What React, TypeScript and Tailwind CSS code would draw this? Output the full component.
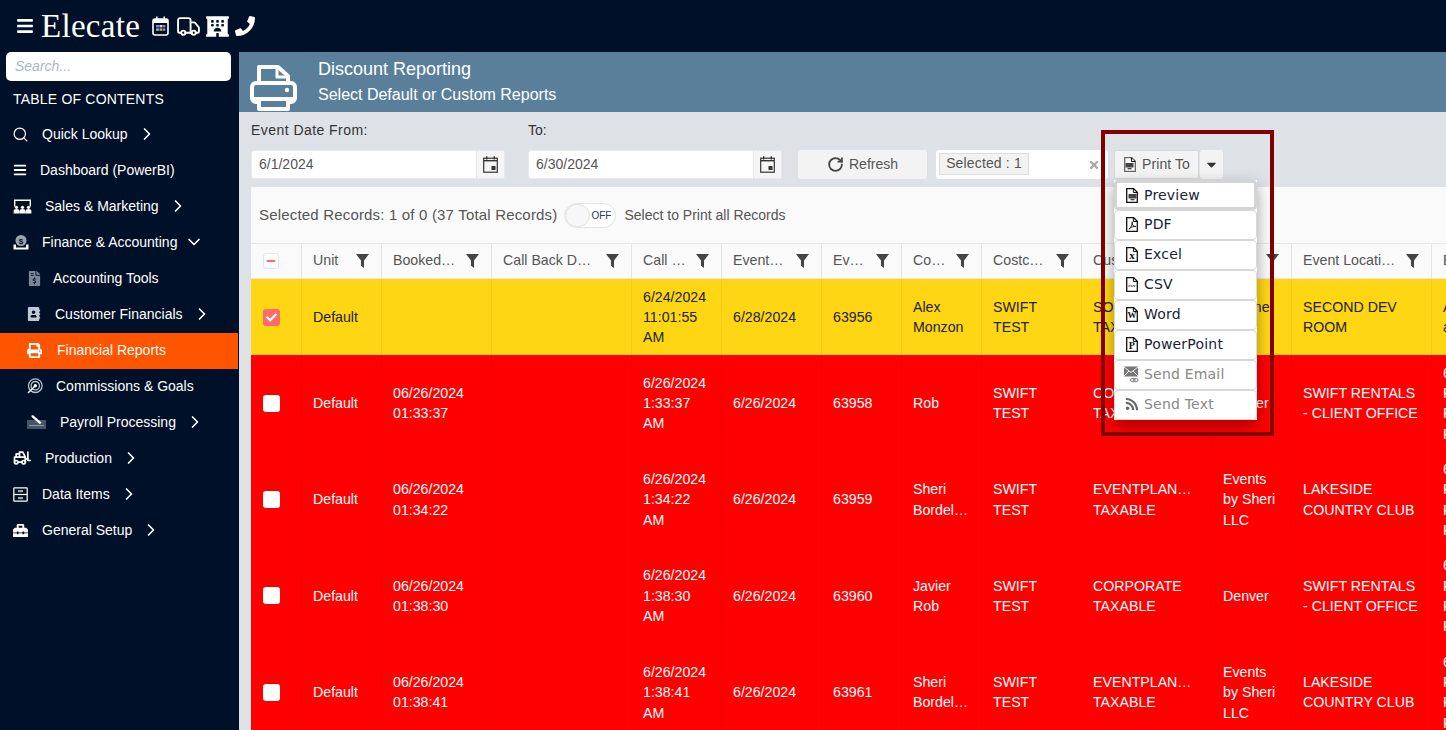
import React from "react";
import { Search, ChevronRight, ChevronDown, Truck, RotateCw } from "lucide-react";
import { FaBars, FaHotel, FaPhone, FaFileInvoiceDollar, FaAddressBook, FaPrint, FaToolbox, FaRss, FaCaretDown, FaTimes, FaCheck, FaMinus } from "react-icons/fa";
import { TbForklift } from "react-icons/tb";

const cols = "grid grid-cols-[51px_80px_110px_140px_90px_100px_80px_80px_100px_130px_80px_140px_100px]";

function CalendarTop() {
  return (
    <svg width="17" height="20" viewBox="0 0 17 20" fill="none">
      <rect x="1" y="3" width="15" height="16" rx="2" stroke="white" strokeWidth="1.6" />
      <rect x="1" y="3" width="15" height="4" fill="white" />
      <rect x="4" y="0.5" width="1.6" height="4" fill="white" />
      <rect x="11.4" y="0.5" width="1.6" height="4" fill="white" />
      <rect x="4" y="9" width="3" height="2.4" fill="#7a8cc0" />
      <rect x="7.5" y="9" width="3" height="2.4" fill="#d0d8e8" />
      <rect x="11" y="9" width="2.4" height="2.4" fill="#c06a80" />
      <rect x="4" y="12.4" width="3" height="2.4" fill="#6fb0d0" />
      <rect x="7.5" y="12.4" width="3" height="2.4" fill="#d0a060" />
      <rect x="11" y="12.4" width="2.4" height="2.4" fill="#7a8cc0" />
    </svg>
  );
}

function BigPrinter() {
  return (
    <svg width="47" height="47" viewBox="0 0 47 47" fill="none" stroke="white" strokeWidth="4" strokeLinejoin="round">
      <path d="M9 20V3h19l10 9v8" />
      <path d="M27 3v10h11" strokeWidth="3" />
      <path d="M9 38H6a4 4 0 0 1-4-4V23a4 4 0 0 1 4-4h35a4 4 0 0 1 4 4v11a4 4 0 0 1-4 4h-3" />
      <path d="M3 35h41" strokeWidth="4" />
      <path d="M9 35v10h29V35" />
      <circle cx="37" cy="26" r="2.2" fill="white" stroke="none" />
    </svg>
  );
}

function CalIcon() {
  return (
    <svg width="15" height="17" viewBox="0 0 15 17" fill="none">
      <rect x="0.7" y="2.2" width="13.6" height="14" stroke="#333" strokeWidth="1.2" />
      <rect x="0.7" y="4" width="13.6" height="1.4" fill="#333" />
      <rect x="3" y="0.3" width="1.4" height="3.2" fill="#333" />
      <rect x="10.6" y="0.3" width="1.4" height="3.2" fill="#333" />
      <rect x="8.5" y="10" width="4" height="4" fill="#333" />
    </svg>
  );
}

function SalesIcon() {
  return (
    <svg width="19" height="15" viewBox="0 0 19 15" fill="white">
      <path d="M1 0.5h17v7h-1.4V2H2.4v5.5H1z" />
      <circle cx="3.5" cy="8.3" r="1.6" />
      <circle cx="9.5" cy="8.3" r="1.6" />
      <circle cx="15.5" cy="8.3" r="1.6" />
      <path d="M0.6 14.5v-2a2.9 2.4 0 0 1 5.8 0v2zM6.6 14.5v-2a2.9 2.4 0 0 1 5.8 0v2zM12.6 14.5v-2a2.9 2.4 0 0 1 5.8 0v2z" />
    </svg>
  );
}

function FinanceIcon() {
  return (
    <svg width="16" height="15" viewBox="0 0 16 15">
      <circle cx="8" cy="5.5" r="5.5" fill="#9aa3b2" />
      <text x="8" y="8.5" fontSize="8" fontWeight="700" textAnchor="middle" fill="#001029" fontFamily="Liberation Sans">$</text>
      <path d="M0.5 9.5h2.5v3h10v-3h2.5v5h-15z" fill="white" />
    </svg>
  );
}

function TargetIcon() {
  return (
    <svg width="16" height="16" viewBox="0 0 16 16" fill="none" stroke="#b9c2cf" strokeWidth="1.3">
      <circle cx="8.3" cy="7.7" r="6.8" />
      <circle cx="8.3" cy="7.7" r="4.2" />
      <circle cx="8.3" cy="7.7" r="1.7" fill="white" stroke="none" />
      <path d="M1 15l6.5-6.5" stroke="white" strokeWidth="1.5" />
    </svg>
  );
}

function PayrollIcon() {
  return (
    <svg width="19" height="14" viewBox="0 0 19 14">
      <rect x="0" y="5" width="19" height="9" fill="#465468" />
      <rect x="2" y="10" width="15" height="1" fill="#8a95a6" />
      <path d="M4.5 0.5l1.7-0.3 8.3 7.4-1.5 1.6L4.6 2z" fill="white" />
    </svg>
  );
}

function DrawerIcon() {
  return (
    <svg width="15" height="15" viewBox="0 0 15 15" fill="none" stroke="white" strokeWidth="1.2">
      <rect x="0.8" y="0.8" width="13.4" height="13.4" rx="0.8" />
      <path d="M0.8 7.5h13.4" />
      <rect x="5" y="3" width="5" height="2.2" fill="#9aa3b2" stroke="none" />
      <rect x="5" y="10" width="5" height="2.2" fill="#9aa3b2" stroke="none" />
    </svg>
  );
}

function Funnel() {
  return (
    <svg width="13" height="14" viewBox="0 0 13 14" className="shrink-0">
      <path d="M0 0h13L8 6.5V14L5 11.8V6.5z" fill="#444" />
    </svg>
  );
}

function Doc({ children, muted }: { children?: React.ReactNode; muted?: boolean }) {
  return (
    <span className="relative flex h-[15px] w-[12px] shrink-0 items-center justify-center">
      <svg width="12" height="15" viewBox="0 0 12 15" fill="none" className="absolute inset-0">
        <path d="M0.7 0.7h7l3.6 3.6v10H0.7z" fill="white" stroke={muted ? "#666" : "#111"} strokeWidth="1.3" />
        <path d="M7.4 0.7v3.8h3.9" stroke="#111" strokeWidth="1" />
      </svg>
      {children}
    </span>
  );
}

function MonitorGlyph() {
  return (
    <svg width="9" height="8" viewBox="0 0 9 8" className="relative mt-[3px]">
      <rect x="0.5" y="1" width="8" height="4.5" fill="#444" />
      <rect x="2.5" y="6" width="4" height="1.3" fill="#444" />
    </svg>
  );
}

const letter = "relative mt-[3px] font-bold leading-none text-[#111] [font-family:'Liberation_Serif',serif]";

const menu = [
  { label: "Preview", icon: <Doc><MonitorGlyph /></Doc>, focus: true },
  {
    label: "PDF",
    icon: (
      <Doc>
        <svg width="9" height="9" viewBox="0 0 9 9" fill="none" className="relative mt-[3px]">
          <path d="M1 8.2C3 6.5 4.6 3 4.2.8c-.6 3 1.4 5 3.8 4.8C5.6 5 3 6 1 8.2z" stroke="#111" strokeWidth="0.9" />
        </svg>
      </Doc>
    ),
  },
  { label: "Excel", icon: <Doc><span className={`${letter} text-[11px]`}>x</span></Doc> },
  { label: "CSV", icon: <Doc><span className={`${letter} text-[5px]`}>csv</span></Doc> },
  { label: "Word", icon: <Doc><span className={`${letter} text-[9px]`}>W</span></Doc> },
  { label: "PowerPoint", icon: <Doc><span className={`${letter} text-[10px]`}>P</span></Doc> },
  {
    label: "Send Email",
    muted: true,
    icon: (
      <svg width="15" height="17" viewBox="0 0 15 17" fill="none" className="-ml-[2px] mr-[-1px] shrink-0">
        <rect x="0" y="0.5" width="14" height="10" fill="#777" />
        <path d="M0 1l7 5.5L14 1M0 10l5-5M14 10L9 5" stroke="white" strokeWidth="0.9" />
        <rect x="6.5" y="12.5" width="4.5" height="3.2" rx="1.6" stroke="#777" />
        <rect x="9.5" y="12.5" width="4.5" height="3.2" rx="1.6" stroke="#777" />
      </svg>
    ),
  },
  { label: "Send Text", muted: true, icon: <FaRss className="-ml-[1px] mr-[-1px] shrink-0 text-[#666]" size={14} /> },
];

const sideItems = [
  { label: "Quick Lookup", row: "pl-[13px]", box: "w-[29px]", gap: "ml-[9px]", chevron: "r", icon: <Search size={17} strokeWidth={1.7} color="white" className="-ml-[1px]" /> },
  { label: "Dashboard (PowerBI)", row: "pl-[13px]", box: "w-[27px]", gap: "", chevron: "", icon: <FaBars size={14} color="white" /> },
  { label: "Sales & Marketing", row: "pl-[13px]", box: "w-[32px]", gap: "ml-[9px]", chevron: "r", icon: <SalesIcon /> },
  { label: "Finance & Accounting", row: "pl-[13px]", box: "w-[29px]", gap: "ml-[7px]", chevron: "d", icon: <FinanceIcon /> },
  { label: "Accounting Tools", row: "pl-[27px]", box: "w-[26px]", gap: "", chevron: "", icon: <FaFileInvoiceDollar size={15} color="#7a8698" /> },
  { label: "Customer Financials", row: "pl-[27px]", box: "w-[28px]", gap: "ml-[9px]", chevron: "r", icon: <FaAddressBook size={14} color="#c3c9d3" /> },
  { label: "Financial Reports", row: "pl-[27px]", box: "w-[30px]", gap: "", chevron: "", active: true, icon: <FaPrint size={15} color="white" /> },
  { label: "Commissions & Goals", row: "pl-[27px]", box: "w-[29px]", gap: "", chevron: "", icon: <TargetIcon /> },
  { label: "Payroll Processing", row: "pl-[27px]", box: "w-[33px]", gap: "ml-[9px]", chevron: "r", icon: <PayrollIcon /> },
  { label: "Production", row: "pl-[12px]", box: "w-[33px]", gap: "ml-[9px]", chevron: "r", icon: <TbForklift size={20} color="white" /> },
  { label: "Data Items", row: "pl-[13px]", box: "w-[29px]", gap: "ml-[9px]", chevron: "r", icon: <DrawerIcon /> },
  { label: "General Setup", row: "pl-[13px]", box: "w-[29px]", gap: "ml-[9px]", chevron: "r", icon: <FaToolbox size={15} color="white" /> },
];

const heads = ["Unit", "Booked…", "Call Back D…", "Call …", "Event…", "Ev…", "Co…", "Costc…", "Cust…", "", "Event Locati…", "E"];

type Row = { selected?: boolean; cells: string[][] };
const rows: Row[] = [
  {
    selected: true,
    cells: [["Default"], [], [], ["6/24/2024", "11:01:55", "AM"], ["6/28/2024"], ["63956"], ["Alex", "Monzon"], ["SWIFT", "TEST"], ["SOUTHWEST", "TAXABLE"], ["Income-", "Tax"], ["SECOND DEV", "ROOM"], ["Alex", "alex"]],
  },
  {
    cells: [["Default"], ["06/26/2024", "01:33:37"], [], ["6/26/2024", "1:33:37", "AM"], ["6/26/2024"], ["63958"], ["Rob"], ["SWIFT", "TEST"], ["CORPORATE", "TAXABLE"], ["Denver"], ["SWIFT RENTALS", "- CLIENT OFFICE"], ["6/26/2024", "Rob", "Rob", "Rob"]],
  },
  {
    cells: [["Default"], ["06/26/2024", "01:34:22"], [], ["6/26/2024", "1:34:22", "AM"], ["6/26/2024"], ["63959"], ["Sheri", "Bordel…"], ["SWIFT", "TEST"], ["EVENTPLAN…", "TAXABLE"], ["Events", "by Sheri", "LLC"], ["LAKESIDE", "COUNTRY CLUB"], ["6/26/2024", "Rob", "Rob", "Rob"]],
  },
  {
    cells: [["Default"], ["06/26/2024", "01:38:30"], [], ["6/26/2024", "1:38:30", "AM"], ["6/26/2024"], ["63960"], ["Javier", "Rob"], ["SWIFT", "TEST"], ["CORPORATE", "TAXABLE"], ["Denver"], ["SWIFT RENTALS", "- CLIENT OFFICE"], ["6/26/2024", "Rob", "Rob", "Rob"]],
  },
  {
    cells: [["Default"], ["06/26/2024", "01:38:41"], [], ["6/26/2024", "1:38:41", "AM"], ["6/26/2024"], ["63961"], ["Sheri", "Bordel…"], ["SWIFT", "TEST"], ["EVENTPLAN…", "TAXABLE"], ["Events", "by Sheri", "LLC"], ["LAKESIDE", "COUNTRY CLUB"], ["6/26/2024", "Rob", "Rob", "Rob"]],
  },
];

function DateBox({ value }: { value: string }) {
  return (
    <div className="flex h-[29px] w-[254px] rounded-[3px] border border-[#e9e9e9] bg-white">
      <div className="flex flex-1 items-center pl-[7px] text-[14px] text-[#555]">{value}</div>
      <div className="flex w-[28px] items-center justify-center border-l border-[#e4e4e4] bg-[#f5f5f5]">
        <CalIcon />
      </div>
    </div>
  );
}

export default function App() {
  return (
    <div className="flex h-screen flex-col overflow-hidden bg-[#001029] text-[14px] [font-family:'Liberation_Sans',Arial,sans-serif]">
      <header className="flex h-[52px] shrink-0 items-center pl-[16px] text-white">
        <FaBars size={18} className="mr-[7px]" />
        <span className="mr-[11px] w-[100px] whitespace-nowrap text-[33px] leading-none tracking-[0.3px] [font-family:'Liberation_Serif',serif]">Elecate</span>
        <div className="flex items-center">
          <span className="mr-[7px] flex"><CalendarTop /></span>
          <Truck size={25} strokeWidth={1.8} className="mr-[5px]" />
          <FaHotel size={23} className="mr-[6px]" />
          <FaPhone size={20} />
        </div>
      </header>

      <div className="flex min-h-0 flex-1">
        <aside className="w-[239px] shrink-0 text-white">
          <div className="pl-[6px] pr-[8px]">
            <div className="flex h-[29px] items-center rounded-[5px] bg-white pl-[9px] text-[14px] italic text-[#a9b7c8]">Search...</div>
          </div>
          <div className="flex h-[35px] items-center pl-[13px] pt-[2px] tracking-[0.2px]">TABLE OF CONTENTS</div>
          <nav>
            {sideItems.map((s) => (
              <div
                key={s.label}
                className={`flex h-[36px] items-center ${s.row} ${s.active ? "-mb-[1px] mr-[1px] mt-[1px] bg-[#ff5500] pb-[2px]" : ""}`}
              >
                <span className={`flex shrink-0 items-center ${s.box}`}>{s.icon}</span>
                <span>{s.label}</span>
                {s.chevron === "r" && <ChevronRight size={20} strokeWidth={2} className={s.gap} />}
                {s.chevron === "d" && <ChevronDown size={20} strokeWidth={2} className={s.gap} />}
              </div>
            ))}
          </nav>
        </aside>

        <main className="min-w-0 flex-1 overflow-hidden bg-[#dee1e6]">
          <div className="flex h-[60px] items-center bg-[#5a7f9b] pl-[11px] text-white">
            <span className="mr-[21px] mt-[10px] flex"><BigPrinter /></span>
            <div className="-mt-[4px]">
              <div className="text-[18px] leading-[30px]">Discount Reporting</div>
              <div className="text-[16px] leading-[22px]">Select Default or Custom Reports</div>
            </div>
          </div>

          <div className="flex h-[75px] pl-[12px] text-[#555]">
            <div className="mr-[23px] flex w-[254px] flex-col">
              <div className="mb-[11px] mt-[10px] h-[17px] leading-[17px] tracking-[0.45px] text-[#333]">Event Date From:</div>
              <DateBox value="6/1/2024" />
            </div>
            <div className="mr-[16px] flex w-[254px] flex-col">
              <div className="mb-[11px] mt-[10px] h-[17px] leading-[17px] text-[#333]">To:</div>
              <DateBox value="6/30/2024" />
            </div>
            <div className="flex items-start gap-[9px] pt-[38px]">
              <div className="flex h-[29px] w-[129px] items-center justify-center gap-[5px] rounded-[3px] bg-[#f3f3f3]">
                <RotateCw size={17} strokeWidth={2.6} color="#444" />
                <span>Refresh</span>
              </div>
              <div className="mr-[-3px] flex h-[29px] w-[172px] rounded-[3px] bg-white pl-[3px] pr-[8px]">
                <span className="mt-[3px] flex h-[22px] w-[90px] items-center justify-center border border-[#ddd] bg-[#f2f2f2] pb-[1px] tracking-[0.15px]">Selected : 1</span>
                <FaTimes size={12} color="#a8a8a8" className="ml-auto mt-[9px]" />
              </div>
              <div className="relative flex">
                <div className="flex h-[29px] w-[85px] items-center justify-center gap-[6px] rounded-[2px] border border-[#d8d8d8] bg-[#f3f3f3] pl-[1px] tracking-[0.1px]">
                  <Doc muted><MonitorGlyph /></Doc>
                  <span>Print To</span>
                </div>
                <div className="ml-[1px] flex h-[29px] w-[23px] items-center justify-center rounded-[3px] bg-[#f3f3f3]">
                  <FaCaretDown size={15} color="#333" />
                </div>
                <div className="absolute left-0 top-[30px] z-10 w-[143px] bg-white shadow-[0_6px_14px_rgba(0,0,0,0.35)]">
                  {menu.map((m) => (
                    <div
                      key={m.label}
                      className={`flex h-[30px] items-center gap-[6px] rounded-[4px] border text-[14px] tracking-[0.2px] [font-family:'DejaVu_Sans',sans-serif] ${
                        m.focus ? "border-[3px] border-[#d4d4d4] pl-[9px]" : "border-[#d8d8d8] pb-[2px] pl-[11px]"
                      } ${m.muted ? "text-[#888]" : "text-[#1a2238]"}`}
                    >
                      {m.icon}
                      <span>{m.label}</span>
                    </div>
                  ))}
                </div>
                <div className="pointer-events-none absolute left-[-13px] top-[-20px] z-20 h-[306px] w-[173px] border-4 border-[#800000]" />
              </div>
            </div>
          </div>

          <section className="ml-[12px] bg-[#fafafa]">
            <div className="flex h-[56px] items-center pl-[8px] text-[#555]">
              <span className="mr-[7px] text-[15px] tracking-[0.18px]">Selected Records: 1 of 0 (37 Total Records)</span>
              <span className="relative mr-[8px] flex h-[25px] w-[52px] items-center justify-end rounded-full border border-[#e4e4e4] bg-white pr-[4px] text-[10px] text-[#2b3a5c]">
                <span className="absolute left-0 top-0 h-[23px] w-[25px] rounded-full border border-[#e0e0e0] bg-[#f7f7f7]" />
                OFF
              </span>
              <span>Select to Print all Records</span>
            </div>

            <div className={`${cols} h-[36px] border-y border-[#e6e6e6] text-[#555]`}>
              <div className="flex items-center justify-center border-r border-[#e6e6e6]">
                <span className="ml-[-10px] flex h-[16px] w-[16px] items-center justify-center rounded-[3px] border border-[#e6e6e6] bg-white">
                  <FaMinus size={10} color="#ff6b6b" />
                </span>
              </div>
              {heads.map((h, i) => (
                <div key={i} className="flex items-center justify-between whitespace-nowrap border-r border-[#e6e6e6] pb-[1px] pl-[11px] pr-[12px] text-[14.2px]">
                  <span>{h}</span>
                  {h !== "E" && <Funnel />}
                </div>
              ))}
            </div>

            {rows.map((r, i) => (
              <div key={i} className={`${cols} ${r.selected ? "bg-[#ffd614] text-[#222]" : "bg-[#ff0000] text-white"}`}>
                <div className="flex items-center border-r border-black/5 pl-[12px]">
                  <span className={`flex h-[17px] w-[17px] items-center justify-center rounded-[3px] ${r.selected ? "bg-[#ff6b6b]" : "bg-white"}`}>
                    {r.selected && <FaCheck size={11} color="white" />}
                  </span>
                </div>
                {r.cells.map((c, j) => (
                  <div key={j} className="flex flex-col justify-center whitespace-nowrap border-r border-black/5 py-[7.5px] pl-[11px] text-[14.2px] leading-[20.35px]">
                    {c.map((line, k) => (
                      <div key={k}>{line}</div>
                    ))}
                  </div>
                ))}
              </div>
            ))}
          </section>
        </main>
      </div>
    </div>
  );
}
